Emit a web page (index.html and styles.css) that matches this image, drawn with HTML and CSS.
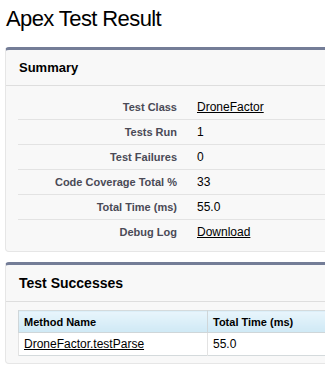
FILE: index.html
```html
<!DOCTYPE html>
<html>
<head>
<meta charset="utf-8">
<link rel="stylesheet" href="styles.css">
</head>
<body>
<h1 class="title">Apex Test Result</h1>
<div class="panel">
  <div class="panel-head">Summary</div>
  <div class="panel-body">
    <div class="row"><div class="label">Test Class</div><div class="value"><a href="#">DroneFactor</a></div></div>
    <div class="row"><div class="label">Tests Run</div><div class="value">1</div></div>
    <div class="row"><div class="label">Test Failures</div><div class="value">0</div></div>
    <div class="row"><div class="label">Code Coverage Total %</div><div class="value">33</div></div>
    <div class="row"><div class="label">Total Time (ms)</div><div class="value">55.0</div></div>
    <div class="row last"><div class="label">Debug Log</div><div class="value"><a href="#">Download</a></div></div>
  </div>
</div>
<div class="panel panel2">
  <div class="panel-head big">Test Successes</div>
  <div class="table-wrap">
    <table class="grid">
      <tr class="hdr"><th class="c1">Method Name</th><th>Total Time (ms)</th></tr>
      <tr><td class="c1"><a href="#">DroneFactor.testParse</a></td><td>55.0</td></tr>
    </table>
  </div>
</div>
</body>
</html>
```
FILE: styles.css
```css
html, body {
  margin: 0;
  padding: 0;
  background: #ffffff;
  overflow: hidden;
}
body {
  padding: 0 0 0 5px;
  font-family: "Liberation Sans", Arial, sans-serif;
  color: #000;
  width: 400px;
}
.title {
  margin: 0;
  padding: 6px 0 0 1px;
  font-size: 22px;
  font-weight: normal;
  letter-spacing: -0.6px;
  line-height: 26px;
  height: 41px;
  color: #000;
}
.panel {
  width: 360px;
  background: #f8f8f8;
  border: 1px solid #e6e6e6;
  border-top: 3px solid #747d97;
  border-radius: 4px;
}
.panel-head {
  height: 35px;
  line-height: 35px;
  padding-left: 13px;
  font-size: 13px;
  font-weight: bold;
  border-bottom: 1px solid #dedede;
}
.panel-head.big {
  height: 36px;
  line-height: 36px;
  font-size: 14px;
}
.panel-body {
  padding: 9px 0 7px 12px;
}
.row {
  display: flex;
  height: 24px;
  border-bottom: 1px solid #e3e3e3;
  align-items: center;
}
.row.last {
  border-bottom: none;
}
.label {
  width: 159px;
  text-align: right;
  font-size: 11px;
  font-weight: bold;
  color: #4a4a56;
}
.value {
  padding-left: 20px;
  font-size: 12px;
}
a {
  color: #000;
  text-decoration: underline;
}
.panel2 {
  margin-top: 10px;
}
.table-wrap {
  padding: 8px 0 7px 12px;
}
.grid {
  border-collapse: collapse;
  background: #fff;
  width: 340px;
  border: 1px solid #d4dadc;
}
.grid th {
  text-align: left;
  height: 21px;
  padding: 0 0 0 5px;
  font-size: 11px;
  font-weight: bold;
  color: #000;
  background: linear-gradient(#e8f5fc, #cfe9f5);
  border-bottom: 1px solid #cfd6d9;
  border-left: 1px solid #cfd6d9;
}
.grid td {
  height: 22px;
  padding: 0 0 0 5px;
  font-size: 12px;
  border-left: 1px solid #e3e3e3;
}
.grid .c1 {
  width: 183px;
}
```
